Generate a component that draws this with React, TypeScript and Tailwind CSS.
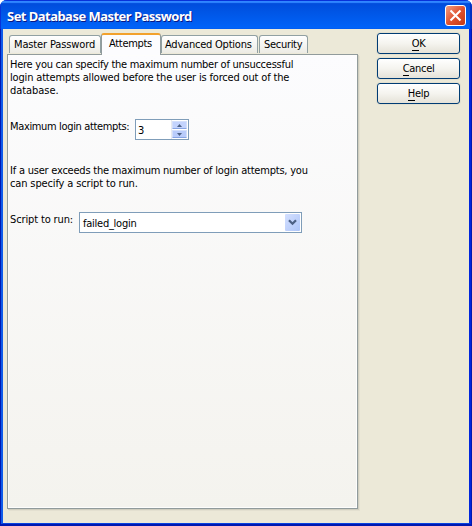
import React from 'react';

const font = "font-['DejaVu_Sans_Condensed','DejaVu_Sans',sans-serif] [font-stretch:condensed]";

function Tab({ label, className }: { label: string; className: string }) {
  return (
    <div
      className={`h-[18px] shrink-0 rounded-t-[3px] border border-b-0 border-[#91a0a2] bg-linear-to-b from-white to-[#ecebe4] pt-[2px] leading-[14px] whitespace-nowrap ${className}`}
    >
      {label}
    </div>
  );
}

function PushButton({ label }: { label: string }) {
  return (
    <button className="flex h-[21px] w-[83px] items-center justify-center rounded-[3px] border border-[#003c74] bg-linear-to-b from-white via-[#f5f4ef] to-[#e5e2d8] pt-px text-[11px] leading-[13px] tracking-[-0.3px] shadow-[0_0_0_1px_#e3e0d0]">
      <span className="border-b border-black leading-[13px]">{label[0]}</span>
      <span className="border-b border-transparent leading-[13px]">{label.slice(1)}</span>
    </button>
  );
}

export default function App() {
  return (
    <div className={`flex h-[526px] w-[472px] flex-col overflow-hidden rounded-t-[7px] bg-[#0831d9] text-[11px] leading-[13px] text-black ${font}`}>
      <header className="flex h-[29px] shrink-0 items-center justify-between bg-linear-to-b from-[#0048d8] from-0% via-[#0055e5] via-40% to-[#0064fa] pr-[6px] pl-[7px] shadow-[inset_0_1px_0_#0831d9,inset_-2px_0_1px_#0030c0,inset_1px_0_0_#0831d9,inset_0_3px_1px_#2f86ff]">
        <h1 className="pt-[3px] font-['Noto_Sans',sans-serif] text-[13px] font-bold tracking-[-0.53px] whitespace-nowrap text-white [text-shadow:1px_1px_#0a1883]">
          Set Database Master Password
        </h1>
        <div className="mt-[2px] flex size-[21px] items-center justify-center rounded-[3px] border border-white bg-linear-to-br from-[#f09c80] via-[#df5230] to-[#c33a12]">
          <svg width="13" height="13" viewBox="0 0 13 13">
            <path d="M1.5 1.5 11.5 11.5M11.5 1.5 1.5 11.5" stroke="#fff" strokeWidth="2.1" />
          </svg>
        </div>
      </header>
      <div className="flex grow border-x border-b-2 border-[#0019b0]">
        <div className="flex grow border-x-2 border-b border-r-[#0026dc] border-b-[#0843e0] border-l-[#0f5bea] bg-[#ece9d8] pl-[4px]">
          <main className="flex w-[351px] shrink-0 flex-col pt-[4px]">
            <nav className="flex h-[21px] shrink-0 items-end pl-[2px]">
              <Tab label="Master Password" className="mb-[1px] w-[92px] pl-[4px] tracking-[-0.13px]" />
              <div className="z-10 -mb-[1px] h-[22px] w-[60px] shrink-0 rounded-t-[3px] border-x border-t-2 border-x-[#919b9c] border-t-[#f2a12c] bg-[#fcfcfe] pt-[2px] pl-[7px] leading-[14px] tracking-[-0.3px]">
                Attempts
              </div>
              <Tab label="Advanced Options" className="mb-[1px] w-[97px] pl-[3px] tracking-[-0.22px]" />
              <Tab label="Security" className="mb-[1px] ml-[1px] w-[49px] pl-[4px] tracking-[-0.3px]" />
            </nav>
            <section className="h-[455px] border border-[#919b9c] bg-linear-to-b from-[#fcfcfe] to-[#f4f3ee] pt-[3px] pl-[2px] shadow-[inset_0_0_0_1px_#fdfdfc,1px_1px_#d0cebf,2px_2px_#e3e0d0]">
              <p className="whitespace-nowrap">
                <span className="tracking-[-0.26px]">Here you can specify the maximum number of unsuccessful</span><br />
                <span className="tracking-[-0.17px]">login attempts allowed before the user is forced out of the</span><br />
                <span className="tracking-[-0.05px]">database.</span>
              </p>
              <div className="mt-[22px] flex">
                <label className="w-[125px] pt-px whitespace-nowrap tracking-[-0.35px]">Maximum login attempts:</label>
                <div className="flex h-[21px] w-[54px] justify-between border border-[#7f9db9] bg-white">
                  <span className="pt-[4px] pl-[2px]">3</span>
                  <div className="flex w-[17px] flex-col gap-px border-l border-[#e8eaf0] py-px pr-px">
                    <div className="flex grow items-center justify-center rounded-[1px] border border-[#d3dffb] border-b-[#87a4e3] bg-[#c3d3fd]">
                      <svg width="5" height="3" viewBox="0 0 5 3"><path d="M0 3 2.5 0 5 3Z" fill="#4d6185" /></svg>
                    </div>
                    <div className="flex grow items-center justify-center rounded-[1px] border border-[#d3dffb] border-b-[#87a4e3] bg-[#b9ccfb]">
                      <svg width="5" height="3" viewBox="0 0 5 3"><path d="M0 0 2.5 3 5 0Z" fill="#4d6185" /></svg>
                    </div>
                  </div>
                </div>
              </div>
              <p className="mt-[24px] whitespace-nowrap">
                <span className="tracking-[-0.22px]">If a user exceeds the maximum number of login attempts, you</span><br />
                <span className="tracking-[-0.14px]">can specify a script to run.</span>
              </p>
              <div className="mt-[22px] flex">
                <label className="w-[69px] pt-px whitespace-nowrap tracking-[-0.13px]">Script to run:</label>
                <div className="flex h-[21px] w-[223px] justify-between border border-[#7f9db9] bg-white">
                  <span className="pt-[4px] pl-[3px] tracking-[-0.25px]">failed_login</span>
                  <div className="m-px flex w-[15px] items-center justify-center rounded-[1px] bg-linear-to-br from-[#d4e0ff] to-[#aec5f8]">
                    <svg width="9" height="7" viewBox="0 0 9 7"><path d="M1 1.2 4.5 4.7 8 1.2" fill="none" stroke="#4d6185" strokeWidth="2.3" /></svg>
                  </div>
                </div>
              </div>
            </section>
          </main>
          <aside className="ml-[19px] flex flex-col gap-[4px] pt-[4px]">
            <PushButton label="OK" />
            <PushButton label="Cancel" />
            <PushButton label="Help" />
          </aside>
        </div>
      </div>
    </div>
  );
}
